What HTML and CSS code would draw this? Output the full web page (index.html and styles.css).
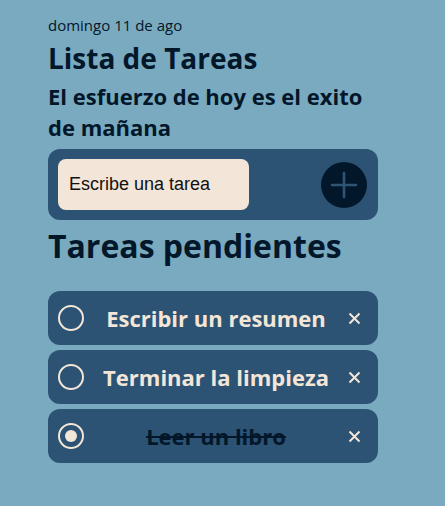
FILE: index.html
```html
<!DOCTYPE html>
<html lang="es">
<head>
<meta charset="utf-8">
<link rel="stylesheet" href="styles.css">
</head>
<body>
<main class="app">
  <p class="date">domingo 11 de ago</p>
  <h1 class="title">Lista de Tareas</h1>
  <h2 class="motto">El esfuerzo de hoy es el exito de mañana</h2>
  <form class="add">
    <div class="field">Escribe una tarea</div>
    <button type="button" class="plus" aria-label="Agregar">
      <svg width="46" height="46" viewBox="0 0 46 46"><circle cx="23" cy="23" r="23" fill="#03172a"/><path d="M23 11v24M11 23h24" stroke="#2f5574" stroke-width="2.6" stroke-linecap="round"/></svg>
    </button>
  </form>
  <h2 class="section">Tareas pendientes</h2>
  <ul class="tasks">
    <li class="task"><span class="check"></span><span class="label">Escribir un resumen</span><svg class="del" width="13" height="13" viewBox="0 0 13 13"><path d="M1.5 1.5l10 10M11.5 1.5l-10 10" stroke="#f3e6d8" stroke-width="2"/></svg></li>
    <li class="task"><span class="check"></span><span class="label">Terminar la limpieza</span><svg class="del" width="13" height="13" viewBox="0 0 13 13"><path d="M1.5 1.5l10 10M11.5 1.5l-10 10" stroke="#f3e6d8" stroke-width="2"/></svg></li>
    <li class="task done"><span class="check"></span><span class="label">Leer un libro</span><svg class="del" width="13" height="13" viewBox="0 0 13 13"><path d="M1.5 1.5l10 10M11.5 1.5l-10 10" stroke="#f3e6d8" stroke-width="2"/></svg></li>
  </ul>
</main>
</body>
</html>
```
FILE: styles.css
```css
html, body { margin: 0; padding: 0; }
body {
  background: #7aaabf;
  font-family: "Open Sans", "Noto Sans", sans-serif;
  color: #03172a;
  min-height: 506px;
}
.app {
  width: 330px;
  margin-left: 48px;
  padding-top: 16px;
}
.date {
  margin: 0;
  font-size: 15px;
  line-height: 19px;
}
.title {
  margin: 5px 0 0;
  font-size: 28px;
  line-height: 36px;
  font-weight: 700;
}
.motto {
  margin: 5px 0 0;
  font-size: 22px;
  line-height: 31px;
  font-weight: 700;
}
.add {
  margin-top: 6px;
  background: #2c5374;
  border-radius: 12px;
  height: 71px;
  box-sizing: border-box;
  padding: 10px 11px 10px 10px;
  display: flex;
  align-items: center;
  justify-content: space-between;
}
.field {
  width: 191px;
  height: 51px;
  box-sizing: border-box;
  background: #f3e6d8;
  border-radius: 8px;
  padding-left: 11px;
  display: flex;
  align-items: center;
  font-family: "Liberation Sans", Arial, sans-serif;
  font-size: 18px;
  color: #111;
}
.plus {
  border: 0;
  padding: 0;
  background: none;
  width: 46px;
  height: 46px;
  display: block;
}
.plus svg { display: block; }
.section {
  margin: 5px 0 0;
  font-size: 32px;
  line-height: 42px;
  font-weight: 700;
}
.tasks {
  list-style: none;
  margin: 24px 0 0;
  padding: 0;
  display: flex;
  flex-direction: column;
  gap: 5px;
}
.task {
  background: #2c5374;
  border-radius: 12px;
  height: 54px;
  display: flex;
  align-items: center;
  padding: 0 17px 0 10px;
  color: #f3e6d8;
}
.check {
  width: 26px;
  height: 26px;
  border: 2px solid #f3e6d8;
  border-radius: 50%;
  flex: none;
  box-sizing: border-box;
  position: relative;
}
.done .check::after {
  content: "";
  position: absolute;
  left: 5px; top: 5px;
  width: 12px; height: 12px;
  border-radius: 50%;
  background: #f3e6d8;
}
.label {
  flex: 1;
  text-align: center;
  font-size: 22px;
  font-weight: 700;
}
.done .label {
  color: #03172a;
  text-decoration: line-through;
  text-decoration-thickness: 2px;
}
.del {
  flex: none;
  display: block;
}
```
